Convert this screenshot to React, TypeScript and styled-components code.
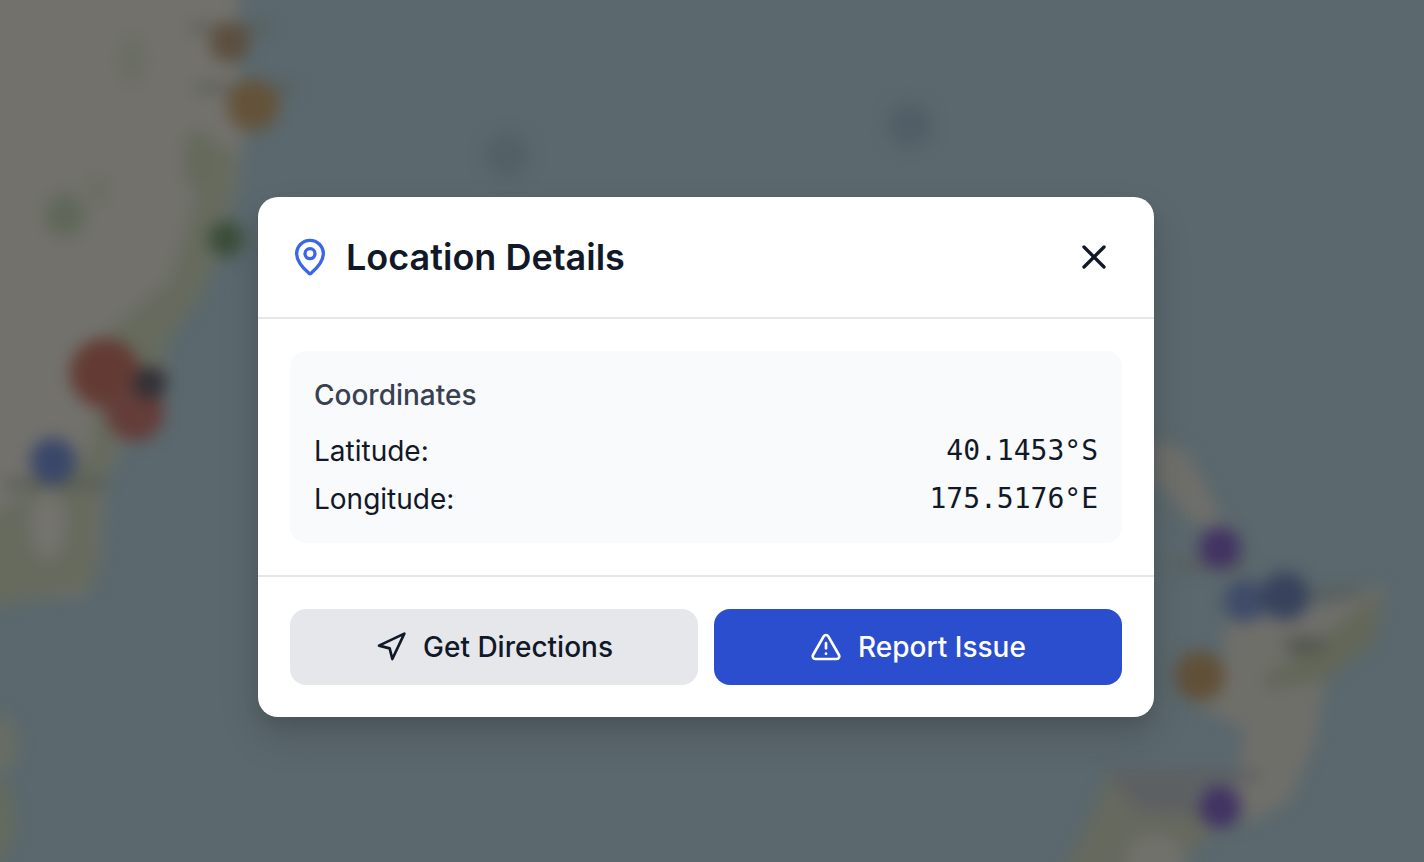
import styled, { createGlobalStyle } from 'styled-components';
import { MapPin, Navigation, TriangleAlert, X } from 'lucide-react';

const GlobalStyle = createGlobalStyle`
  html, body {
    margin: 0;
    padding: 0;
    height: 100%;
    overflow: hidden;
    background: #5b686d;
    font-family: Inter, "Liberation Sans", sans-serif;
    -webkit-font-smoothing: antialiased;
  }
`;

const Page = styled.div`
  position: relative;
  width: 100vw;
  height: 100vh;
  overflow: hidden;
`;

const MapImage = styled.svg`
  display: block;
  width: 100%;
  height: 100%;
`;

const SoftLayer = styled.g`
  filter: blur(8px);
`;

const Overlay = styled.div`
  position: absolute;
  inset: 0;
  display: flex;
  align-items: center;
  justify-content: center;
  padding: 52px 12px 0 0;
`;

const Modal = styled.div`
  width: 896px;
  background: #fff;
  border-radius: 20px;
  box-shadow: 0 20px 40px rgba(0, 0, 0, 0.14), 0 8px 16px rgba(0, 0, 0, 0.08);
`;

const Header = styled.header`
  display: flex;
  align-items: center;
  justify-content: space-between;
  height: 120px;
  padding: 0 40px 0 32px;
  border-bottom: 2px solid #e5e7eb;
`;

const TitleGroup = styled.div`
  display: flex;
  align-items: center;
  gap: 16px;
`;

const Title = styled.h2`
  margin: 0;
  font-size: 36px;
  line-height: 40px;
  font-weight: 600;
  color: #111827;
`;

const CloseButton = styled.button`
  display: flex;
  padding: 0;
  border: 0;
  background: none;
  color: #111827;
`;

const Body = styled.div`
  padding: 32px;
  border-bottom: 2px solid #e5e7eb;
`;

const CoordinatesCard = styled.section`
  display: flex;
  flex-direction: column;
  gap: 8px;
  padding: 24px;
  background: #f9fafb;
  border-radius: 16px;
`;

const CardLabel = styled.h3`
  margin: 0 0 8px;
  font-size: 28px;
  line-height: 40px;
  font-weight: 500;
  color: #374151;
`;

const Row = styled.div`
  display: flex;
  justify-content: space-between;
  font-size: 28px;
  line-height: 40px;
  color: #111827;
`;

const RowValue = styled.span`
  font-family: "DejaVu Sans Mono", "Liberation Mono", monospace;
`;

const Actions = styled.footer`
  display: grid;
  grid-template-columns: 1fr 1fr;
  gap: 16px;
  padding: 32px;
`;

const ActionButton = styled.button<{ $primary?: boolean }>`
  display: flex;
  align-items: center;
  justify-content: center;
  gap: 16px;
  height: 76px;
  border: 0;
  border-radius: 16px;
  font-family: inherit;
  font-size: 28px;
  font-weight: 500;
  color: ${({ $primary }) => ($primary ? '#fff' : '#111827')};
  background: ${({ $primary }) => ($primary ? '#2b4ecf' : '#e5e7eb')};
`;

const pins = [
  { x: 230, y: 42, r: 20, fill: '#5c4f40' },
  { x: 253, y: 105, r: 26, fill: '#64533a' },
  { x: 226, y: 239, r: 18, fill: '#3c4e3a' },
  { x: 105, y: 373, r: 35, fill: '#633b34' },
  { x: 135, y: 412, r: 29, fill: '#643d39' },
  { x: 150, y: 383, r: 17, fill: '#343136' },
  { x: 53, y: 461, r: 23, fill: '#3a4769' },
  { x: 507, y: 155, r: 22, fill: '#536066' },
  { x: 910, y: 125, r: 22, fill: '#525e67' },
  { x: 1220, y: 548, r: 21, fill: '#423363' },
  { x: 1245, y: 601, r: 21, fill: '#3f4b68' },
  { x: 1285, y: 596, r: 24, fill: '#37425c' },
  { x: 1200, y: 676, r: 25, fill: '#615038' },
  { x: 1220, y: 807, r: 21, fill: '#423363' },
];

export default function App() {
  return (
    <Page>
      <GlobalStyle />
      <MapImage viewBox="0 0 1424 862" preserveAspectRatio="none">
        <rect width="1424" height="862" fill="#5b686d" />
        <SoftLayer>
          {/* Australia */}
          <path
            d="M-30 -30 L240 -30 L236 50 L246 125 L236 190 L222 250 L190 310 L165 345 L165 395 L125 440 L105 480 L100 560 L85 595 L30 600 L-30 610 Z"
            fill="#72716c"
          />
          <path d="M205 140 L236 150 L232 200 L205 290 L165 345 L160 390 L120 440 L100 490 L95 585 L30 600 L-30 610 L-30 530 L30 490 L90 450 L110 330 L170 280 L195 200 Z" fill="#666b5e" />
          <ellipse cx="132" cy="60" rx="12" ry="24" fill="#6a6e62" />
          <ellipse cx="65" cy="215" rx="20" ry="22" fill="#60685a" />
          <ellipse cx="98" cy="190" rx="10" ry="14" fill="#6a6e62" />
          <ellipse cx="198" cy="160" rx="14" ry="30" fill="#646a5c" />
          <ellipse cx="48" cy="525" rx="18" ry="35" fill="#74736e" />
          <rect x="5" y="480" width="100" height="8" fill="#565952" />
          {/* Tasmania corner */}
          <ellipse cx="-2" cy="745" rx="20" ry="30" fill="#676d63" />
          <ellipse cx="-4" cy="820" rx="18" ry="40" fill="#646a5c" />
          {/* North Island */}
          <path d="M1155 440 L1185 450 L1208 490 L1224 530 L1190 520 L1155 480 Z" fill="#6f6f6a" />
          <path d="M1225 625 L1290 610 L1330 605 L1385 585 L1375 640 L1325 680 L1315 740 L1290 800 L1245 825 L1235 790 L1245 730 L1190 700 L1180 680 L1222 670 Z" fill="#6f6f6a" />
          <path d="M1260 680 L1320 640 L1380 590 L1375 640 L1325 680 L1270 690 Z" fill="#636759" />
          <ellipse cx="1305" cy="645" rx="22" ry="9" fill="#545750" />
          <rect x="1300" y="590" width="60" height="7" fill="#575a55" />
          <rect x="1175" y="562" width="70" height="7" fill="#575a55" />
          {/* South Island */}
          <path d="M1110 775 L1190 785 L1215 830 L1180 862 L1060 880 L1090 820 Z" fill="#66695e" />
          <path d="M1105 770 L1260 770 L1260 778 L1190 790 L1200 815 L1140 812 Z" fill="#5d6062" />
          <ellipse cx="1155" cy="860" rx="30" ry="26" fill="#71716c" />
          <rect x="190" y="25" width="80" height="6" fill="#565952" />
          <rect x="195" y="85" width="100" height="6" fill="#565952" />
          {pins.map((pin) => (
            <circle key={`${pin.x}-${pin.y}`} cx={pin.x} cy={pin.y} r={pin.r} fill={pin.fill} />
          ))}
        </SoftLayer>
      </MapImage>
      <Overlay>
        <Modal>
          <Header>
            <TitleGroup>
              <MapPin size={40} color="#3b66e8" strokeWidth={2} />
              <Title>Location Details</Title>
            </TitleGroup>
            <CloseButton aria-label="Close">
              <X size={40} strokeWidth={2} />
            </CloseButton>
          </Header>
          <Body>
            <CoordinatesCard>
              <CardLabel>Coordinates</CardLabel>
              <Row>
                <span>Latitude:</span>
                <RowValue>40.1453°S</RowValue>
              </Row>
              <Row>
                <span>Longitude:</span>
                <RowValue>175.5176°E</RowValue>
              </Row>
            </CoordinatesCard>
          </Body>
          <Actions>
            <ActionButton>
              <Navigation size={32} strokeWidth={2} />
              Get Directions
            </ActionButton>
            <ActionButton $primary>
              <TriangleAlert size={32} strokeWidth={2} />
              Report Issue
            </ActionButton>
          </Actions>
        </Modal>
      </Overlay>
    </Page>
  );
}
